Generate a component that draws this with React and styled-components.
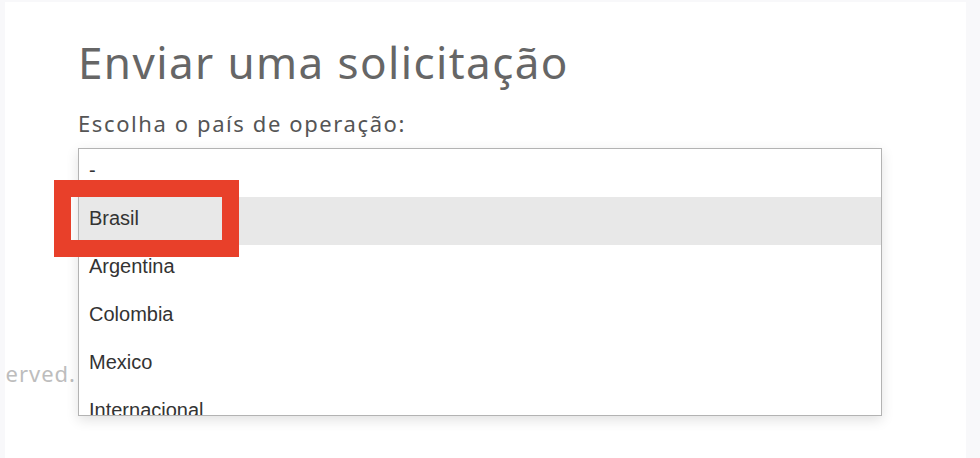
import React from "react";
import styled, { createGlobalStyle } from "styled-components";

const countries = ["-", "Brasil", "Argentina", "Colombia", "Mexico", "Internacional"];

const App = () => {
  return (
    <Page>
      <GlobalStyle />
      <Card>
        <Title>Enviar uma solicitação</Title>
        <Label>Escolha o país de operação:</Label>
        <Field>
          <Footer>All rights reserved.</Footer>
          <ListBox>
            {countries.map((name) => (
              <Option key={name} $active={name === "Brasil"}>
                {name}
              </Option>
            ))}
          </ListBox>
          <Highlight />
        </Field>
      </Card>
    </Page>
  );
};

export default App;

const GlobalStyle = createGlobalStyle`
  html, body {
    margin: 0;
    padding: 0;
    background: #f8f8fa;
  }
  * {
    box-sizing: border-box;
  }
`;

const Page = styled.div`
  width: 980px;
  height: 458px;
  overflow: hidden;
  padding: 2px 14px 0 5px;
`;

const Card = styled.div`
  background: #ffffff;
  height: 100%;
  overflow: hidden;
  padding: 32px 0 0 73px;
`;

const Title = styled.h1`
  margin: 0;
  font-family: "Noto Sans", sans-serif;
  font-weight: 400;
  font-size: 44px;
  line-height: 56px;
  letter-spacing: 1.4px;
  color: #666666;
`;

const Label = styled.div`
  margin-top: 20px;
  font-family: "Noto Sans", sans-serif;
  font-size: 22px;
  line-height: 26px;
  letter-spacing: 1.6px;
  color: #555555;
`;

const Field = styled.div`
  position: relative;
  margin-top: 12px;
`;

const ListBox = styled.ul`
  position: relative;
  z-index: 1;
  list-style: none;
  margin: 0;
  padding: 0;
  width: 804px;
  height: 268px;
  overflow: hidden;
  background: #ffffff;
  border: 1px solid #b3b3b3;
  box-shadow: 0 4px 12px rgba(0, 0, 0, 0.12);
`;

const Option = styled.li`
  flex: none;
  height: 48px;
  padding: 0 10px 6px;
  display: flex;
  align-items: center;
  font-family: "Liberation Sans", Arial, sans-serif;
  font-size: 20px;
  color: #333333;
  background: ${({ $active }) => ($active ? "#e8e8e8" : "transparent")};
`;

const Footer = styled.div`
  position: absolute;
  right: 100%;
  margin-right: 2px;
  top: 210px;
  font-family: "Noto Sans", sans-serif;
  font-size: 22px;
  letter-spacing: 1px;
  color: #bdbdbd;
  white-space: nowrap;
`;

const Highlight = styled.div`
  position: absolute;
  z-index: 2;
  left: -24px;
  top: 32px;
  width: 185px;
  height: 77px;
  border: 17px solid #e8402a;
`;
